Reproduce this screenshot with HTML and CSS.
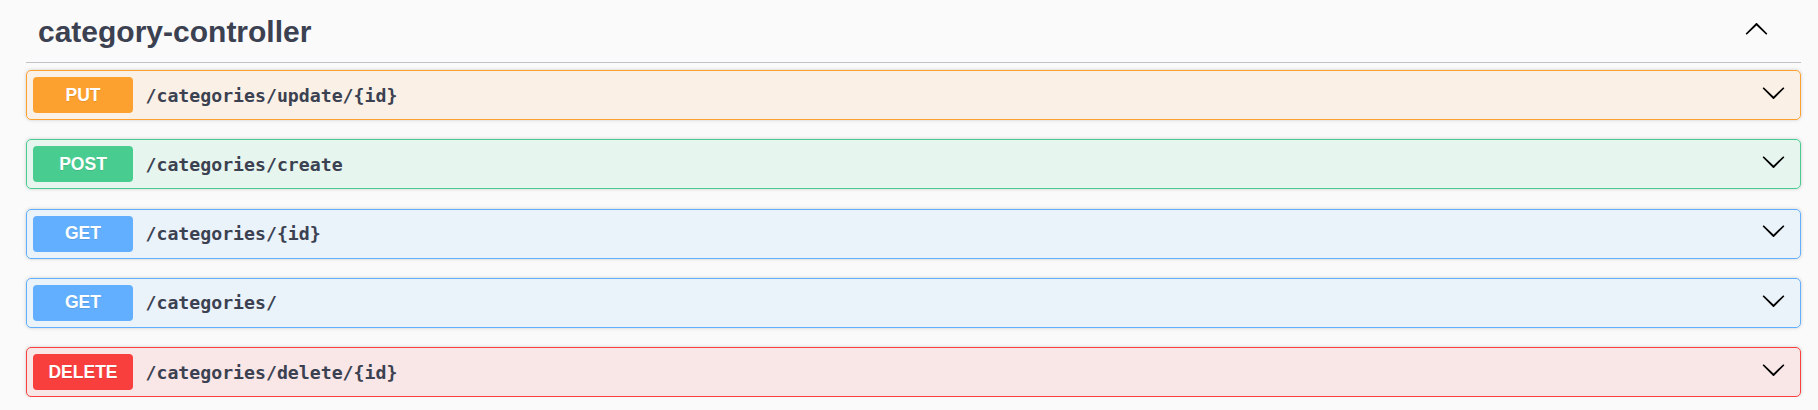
FILE: index.html
```html
<!DOCTYPE html>
<html lang="en">
<head>
<meta charset="utf-8">
<title>category-controller</title>
<link rel="stylesheet" href="styles.css">
</head>
<body>
<div class="wrapper">
  <section class="tag-section">
    <div class="tag">
      <h3 class="tag-title">category-controller</h3>
      <svg class="tag-arrow" viewBox="0 0 20 20" width="25" height="25" aria-hidden="true"><path d="M17.418 6.109c.272-.268.709-.268.979 0s.271.701 0 .969l-7.908 7.83c-.27.268-.707.268-.979 0l-7.908-7.83c-.27-.268-.27-.701 0-.969.271-.268.709-.268.979 0L10 13.25l7.418-7.141z"/></svg>
    </div>
    <div class="ops">
      <div class="opblock put">
        <span class="method">PUT</span>
        <span class="path">/categories/update/{id}</span>
        <svg class="op-arrow" viewBox="0 0 20 20" width="25" height="25" aria-hidden="true"><path d="M17.418 6.109c.272-.268.709-.268.979 0s.271.701 0 .969l-7.908 7.83c-.27.268-.707.268-.979 0l-7.908-7.83c-.27-.268-.27-.701 0-.969.271-.268.709-.268.979 0L10 13.25l7.418-7.141z"/></svg>
      </div>
      <div class="opblock post">
        <span class="method">POST</span>
        <span class="path">/categories/create</span>
        <svg class="op-arrow" viewBox="0 0 20 20" width="25" height="25" aria-hidden="true"><path d="M17.418 6.109c.272-.268.709-.268.979 0s.271.701 0 .969l-7.908 7.83c-.27.268-.707.268-.979 0l-7.908-7.83c-.27-.268-.27-.701 0-.969.271-.268.709-.268.979 0L10 13.25l7.418-7.141z"/></svg>
      </div>
      <div class="opblock get">
        <span class="method">GET</span>
        <span class="path">/categories/{id}</span>
        <svg class="op-arrow" viewBox="0 0 20 20" width="25" height="25" aria-hidden="true"><path d="M17.418 6.109c.272-.268.709-.268.979 0s.271.701 0 .969l-7.908 7.83c-.27.268-.707.268-.979 0l-7.908-7.83c-.27-.268-.27-.701 0-.969.271-.268.709-.268.979 0L10 13.25l7.418-7.141z"/></svg>
      </div>
      <div class="opblock get">
        <span class="method">GET</span>
        <span class="path">/categories/</span>
        <svg class="op-arrow" viewBox="0 0 20 20" width="25" height="25" aria-hidden="true"><path d="M17.418 6.109c.272-.268.709-.268.979 0s.271.701 0 .969l-7.908 7.83c-.27.268-.707.268-.979 0l-7.908-7.83c-.27-.268-.27-.701 0-.969.271-.268.709-.268.979 0L10 13.25l7.418-7.141z"/></svg>
      </div>
      <div class="opblock delete">
        <span class="method">DELETE</span>
        <span class="path">/categories/delete/{id}</span>
        <svg class="op-arrow" viewBox="0 0 20 20" width="25" height="25" aria-hidden="true"><path d="M17.418 6.109c.272-.268.709-.268.979 0s.271.701 0 .969l-7.908 7.83c-.27.268-.707.268-.979 0l-7.908-7.83c-.27-.268-.27-.701 0-.969.271-.268.709-.268.979 0L10 13.25l7.418-7.141z"/></svg>
      </div>
    </div>
  </section>
</div>
</body>
</html>
```

FILE: styles.css
```css
html, body {
  margin: 0;
  padding: 0;
  background: #fafafa;
}

body {
  font-family: "Liberation Sans", Arial, sans-serif;
  color: #3b4151;
}

.wrapper {
  padding: 0 17px 0 26px;
}

.tag {
  display: flex;
  align-items: center;
  padding: 14.5px 0 13.5px 12px;
  border-bottom: 1px solid rgba(59, 65, 81, 0.3);
  margin-bottom: 7px;
}

.tag-title {
  flex: 1;
  margin: 0;
  font-size: 30px;
  line-height: 34px;
  font-weight: 700;
  color: #3b4151;
}

.tag-arrow {
  margin-right: 31.7px;
  margin-bottom: 4px;
  transform: rotate(180deg);
  fill: #000;
}

.ops {
  display: flex;
  flex-direction: column;
  gap: 19.3px;
}

.opblock {
  display: flex;
  align-items: center;
  padding: 6px 14px 6px 6px;
  border: 1px solid;
  border-radius: 5px;
  box-shadow: 0 0 3.75px rgba(0, 0, 0, 0.19);
}

.method {
  width: 100px;
  height: 36px;
  flex: none;
  display: flex;
  align-items: center;
  justify-content: center;
  border-radius: 4px;
  color: #fff;
  font-family: "Liberation Sans", Arial, sans-serif;
  font-size: 17.5px;
  font-weight: 700;
  text-shadow: 0 1px 0 rgba(0, 0, 0, 0.1);
}

.path {
  flex: 1;
  padding: 0 12.5px;
  font-family: "DejaVu Sans Mono", "Liberation Mono", monospace;
  font-size: 18.2px;
  font-weight: 700;
  color: #3b4151;
}

.op-arrow {
  flex: none;
  margin-bottom: 5.6px;
  fill: #000;
}

.put { background: rgba(252, 161, 48, 0.1); border-color: #fca130; }
.put .method { background: #fca130; }

.post { background: rgba(73, 204, 144, 0.1); border-color: #49cc90; }
.post .method { background: #49cc90; }

.get { background: rgba(97, 175, 254, 0.1); border-color: #61affe; }
.get .method { background: #61affe; }

.delete { background: rgba(249, 62, 62, 0.1); border-color: #f93e3e; }
.delete .method { background: #f93e3e; }
```
